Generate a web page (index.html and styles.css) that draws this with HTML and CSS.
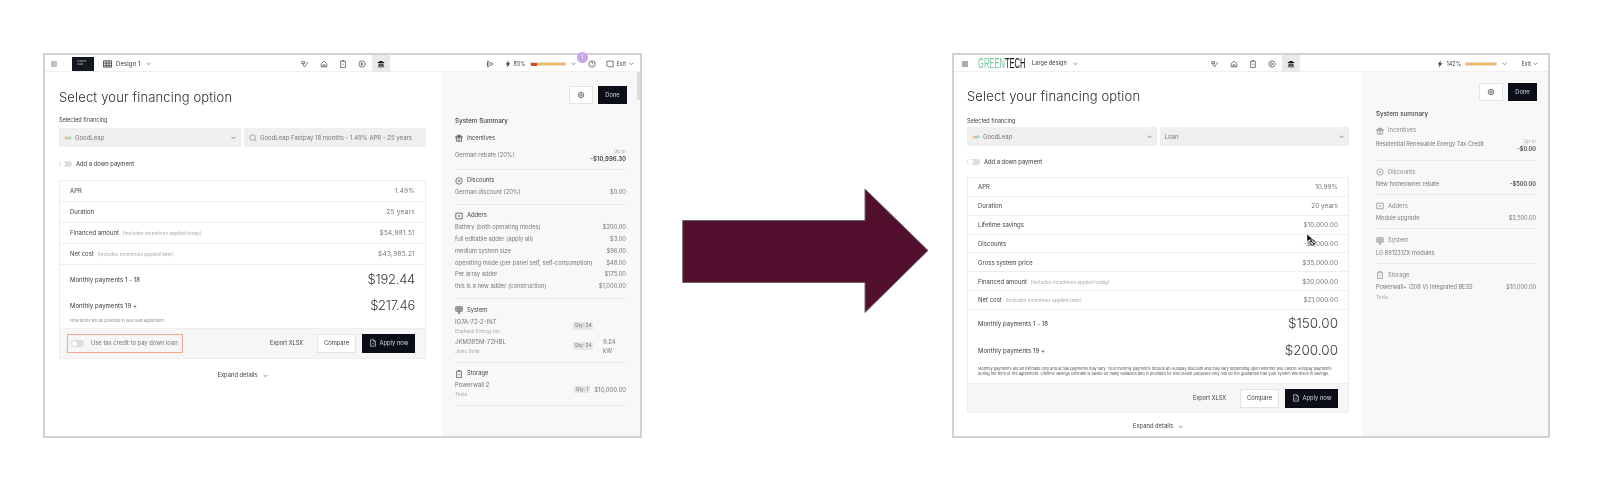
FILE: index.html
```html
<!DOCTYPE html>
<html lang="en">
<head>
<meta charset="utf-8">
<title>Financing option before and after</title>
<link rel="stylesheet" href="styles.css">
</head>
<body>
<svg class="sprite" aria-hidden="true">
  <symbol id="i-menu" viewBox="0 0 8 8"><path d="M1 2h6M1 4h6M1 6h6"/></symbol>
  <symbol id="i-grid" viewBox="0 0 10 8"><path d="M.5.5h9v7h-9zM.5 3h9M.5 5.5h9M3.5.5v7M6.5.5v7"/></symbol>
  <symbol id="i-chev" viewBox="0 0 6 4"><path d="M.7.8 3 3.2 5.3.8"/></symbol>
  <symbol id="i-roof" viewBox="0 0 10 10"><path d="M1 2h3.5v2.5H1zM2.700 4.500V7L4.500 8.500 8.500 2.500"/></symbol>
  <symbol id="i-home" viewBox="0 0 10 10"><path d="M1.500 4.500 5 1.500l3.500 3v4h-7zM3.700 8.500V6h2.600v2.500"/></symbol>
  <symbol id="i-batt" viewBox="0 0 10 10"><path d="M2 1.500h6v8H2zM4 1.500V.7h2v.8M5 4.500v2"/></symbol>
  <symbol id="i-play" viewBox="0 0 10 10"><circle cx="5" cy="5" r="4"/><path d="M4 3.200 6.500 5 4 6.800z"/></symbol>
  <symbol id="i-bank" viewBox="0 0 10 10"><path class="solid" d="M5 .8 9.200 3v.8H.8V3zM1 8h8v1.200H1zM2 4.300h1.500v3.200H2zM4.200 4.300h1.600v3.200H4.200zM6.500 4.300H8v3.200H6.500z"/></symbol>
  <symbol id="i-send" viewBox="0 0 10 10"><path d="M2 1.200 8.500 5 2 8.800zM.8 5H5"/></symbol>
  <symbol id="i-bolt" viewBox="0 0 10 10"><path class="solid" d="M6 .5 2 5.500h2.200L3.600 9.500 8 4.200H5.600z"/></symbol>
  <symbol id="i-help" viewBox="0 0 10 10"><circle cx="5" cy="5" r="4"/><path d="M4 4c0-1.400 2.200-1.200 2 0 0 .8-1 .8-1 1.800M5 7v.5"/></symbol>
  <symbol id="i-exit" viewBox="0 0 10 10"><path d="M1 7V1.500h8v7H4M1 6.200 3.500 8.500M1 8.500h.5"/></symbol>
  <symbol id="i-gear" viewBox="0 0 10 10"><circle cx="5" cy="5" r="3.500"/><circle cx="5" cy="5" r="1.500"/></symbol>
  <symbol id="i-gift" viewBox="0 0 10 10"><path d="M1 3h8v1.800H1zM1.800 4.800V9h6.400V4.800M5 3v6M5 3C3 3 2.500 1 3.700 1 4.500 1 5 3 5 3c0 0 .5-2 1.300-2C7.500 1 7 3 5 3"/></symbol>
  <symbol id="i-disc" viewBox="0 0 10 10"><circle cx="5" cy="5" r="4"/><path d="M3.500 5h3M5 3.800v2.400"/></symbol>
  <symbol id="i-add" viewBox="0 0 10 10"><path d="M1 1.500h8v7H1z"/><path class="solid" d="M4.200 4.200h1.600v1.600H4.200z"/></symbol>
  <symbol id="i-sys" viewBox="0 0 10 10"><path d="M1 1h8v5.500H1zM1 3.700h8M3.700 1v5.500M6.300 1v5.500M5 6.500V9M3.500 9h3"/></symbol>
  <symbol id="i-doc" viewBox="0 0 10 10"><path d="M2 1h4l2 2v6H2zM6 1v2h2M3.800 6.700 5 5.300l1.200 1.400"/></symbol>
  <symbol id="i-search" viewBox="0 0 10 10"><circle cx="4.500" cy="4.500" r="3.500"/><path d="m7 7 2.300 2.300"/></symbol>
  <symbol id="i-leap" viewBox="0 0 10 5"><path class="orange" d="M.8 2.800C1.500.8 3.500.8 5 2.500"/><path class="green" d="M5 2.500c1.500 1.800 3.500 1.800 4.200-.3"/><path class="orange" d="M1 3.800c1 .5 2.500.3 4-1.300"/><path class="green" d="M5 2.500c1-1.300 3-1.800 4-.7"/></symbol>
</svg>

<section class="window before">
  <header class="topbar">
    <svg class="ico menu"><use href="#i-menu"/></svg>
    <div class="logo-box"><span>Outlook<br>Solar</span></div>
    <svg class="ico grid"><use href="#i-grid"/></svg>
    <span class="design">Design 1</span>
    <svg class="chev"><use href="#i-chev"/></svg>
    <nav class="steps">
      <svg class="ico"><use href="#i-roof"/></svg>
      <svg class="ico"><use href="#i-home"/></svg>
      <svg class="ico"><use href="#i-batt"/></svg>
      <svg class="ico"><use href="#i-play"/></svg>
      <span class="step-on"><svg class="ico"><use href="#i-bank"/></svg></span>
    </nav>
    <div class="tools">
      <svg class="ico send"><use href="#i-send"/></svg>
      <svg class="ico bolt"><use href="#i-bolt"/></svg>
      <span class="pct">85%</span>
      <span class="meter"><span class="meter-red"></span></span>
      <svg class="chev"><use href="#i-chev"/></svg>
      <span class="help"><svg class="ico"><use href="#i-help"/></svg><span class="badge">1</span></span>
      <svg class="ico exit"><use href="#i-exit"/></svg>
      <span class="exit-label">Exit</span>
      <svg class="chev"><use href="#i-chev"/></svg>
    </div>
  </header>
  <div class="body">
    <main class="main">
      <h1>Select your financing option</h1>
      <div class="field-label">Selected financing</div>
      <div class="selects">
        <div class="select"><svg class="leap"><use href="#i-leap"/></svg><span>GoodLeap</span><svg class="chev"><use href="#i-chev"/></svg></div>
        <div class="select search"><svg class="ico"><use href="#i-search"/></svg><span>GoodLeap Fastpay 18 months - 1.49% APR - 25 years</span></div>
      </div>
      <div class="toggle-row"><span class="toggle"></span><span>Add a down payment</span></div>
      <div class="card">
        <div class="row"><span class="name">APR</span><span class="val">1.49%</span></div>
        <div class="row"><span class="name">Duration</span><span class="val">25 years</span></div>
        <div class="row"><span class="name strong">Financed amount <small>(Includes incentives applied today)</small></span><span class="val">$54,981.51</span></div>
        <div class="row"><span class="name strong">Net cost <small>(Includes incentives applied later)</small></span><span class="val">$43,985.21</span></div>
        <div class="monthly"><span>Monthly payments 1 - 18</span><span class="big">$192.44</span></div>
        <div class="monthly"><span>Monthly payments 19 +</span><span class="big">$217.46</span></div>
        <p class="fine">Final terms will be provided in your loan agreement.</p>
        <div class="foot">
          <div class="credit"><span class="toggle"></span><span>Use tax credit to pay down loan</span></div>
          <span class="export">Export XLSX</span>
          <span class="btn compare">Compare</span>
          <span class="btn dark apply"><svg class="ico"><use href="#i-doc"/></svg>Apply now</span>
        </div>
      </div>
      <div class="expand">Expand details <svg class="chev"><use href="#i-chev"/></svg></div>
    </main>
    <aside class="side">
      <span class="scroll"></span>
      <div class="side-btns"><span class="btn"><svg class="ico"><use href="#i-gear"/></svg></span><span class="btn dark">Done</span></div>
      <h2>System Summary</h2>
      <div class="group first">
        <div class="head"><svg class="ico"><use href="#i-gift"/></svg>Incentives</div>
        <div class="line upto"><span>German rebate (20%)</span><span class="stack"><small>Up to</small><b>-$10,996.30</b></span></div>
      </div>
      <div class="group">
        <div class="head"><svg class="ico"><use href="#i-disc"/></svg>Discounts</div>
        <div class="line"><span>German discount (20%)</span><span>$0.00</span></div>
      </div>
      <div class="group">
        <div class="head"><svg class="ico"><use href="#i-add"/></svg>Adders</div>
        <div class="line"><span>Battery (both operating modes)</span><span>$200.00</span></div>
        <div class="line"><span>full editable adder (apply all)</span><span>$3.00</span></div>
        <div class="line"><span>medium system size</span><span>$96.00</span></div>
        <div class="line"><span>operating mode (per panel self, self-consumption)</span><span>$48.00</span></div>
        <div class="line"><span>Per array adder</span><span>$175.00</span></div>
        <div class="line"><span>this is a new adder (construction)</span><span>$1,000.00</span></div>
      </div>
      <div class="group">
        <div class="head"><svg class="ico"><use href="#i-sys"/></svg>System</div>
        <div class="item"><div class="item-name"><span>IQ7A-72-2-INT</span><small>Enphase Energy Inc.</small></div><span class="qty">Qty: 24</span><span class="kw"></span></div>
        <div class="item"><div class="item-name"><span>JKM385M-72HBL</span><small>Jinko Solar</small></div><span class="qty">Qty: 24</span><span class="kw">9.24<br>kW</span></div>
      </div>
      <div class="group">
        <div class="head"><svg class="ico"><use href="#i-batt"/></svg>Storage</div>
        <div class="item"><div class="item-name"><span>Powerwall 2</span><small>Tesla</small></div><span class="qty">Qty: 1</span><span class="price">$10,000.00</span></div>
      </div>
    </aside>
  </div>
</section>

<svg class="arrow" viewBox="0 0 247 126" aria-hidden="true"><path d="M.7 32.500H183V1L246 62.500 183 124.500V94.500H.7z"/></svg>

<section class="window after">
  <header class="topbar">
    <svg class="ico menu"><use href="#i-menu"/></svg>
    <div class="brand"><span class="brand-text"><span class="brand-green">GREEN</span>TECH</span></div>
    <span class="design">Large design</span>
    <svg class="chev"><use href="#i-chev"/></svg>
    <nav class="steps">
      <svg class="ico"><use href="#i-roof"/></svg>
      <svg class="ico"><use href="#i-home"/></svg>
      <svg class="ico"><use href="#i-batt"/></svg>
      <svg class="ico"><use href="#i-play"/></svg>
      <span class="step-on"><svg class="ico"><use href="#i-bank"/></svg></span>
    </nav>
    <div class="tools">
      <svg class="ico bolt"><use href="#i-bolt"/></svg>
      <span class="pct">142%</span>
      <span class="meter"></span>
      <svg class="chev"><use href="#i-chev"/></svg>
      <span class="exit-label">Exit</span>
      <svg class="chev"><use href="#i-chev"/></svg>
    </div>
  </header>
  <div class="body">
    <main class="main">
      <h1>Select your financing option</h1>
      <div class="field-label">Selected financing</div>
      <div class="selects">
        <div class="select"><svg class="leap"><use href="#i-leap"/></svg><span>GoodLeap</span><svg class="chev"><use href="#i-chev"/></svg></div>
        <div class="select"><span>Loan</span><svg class="chev"><use href="#i-chev"/></svg></div>
      </div>
      <div class="toggle-row"><span class="toggle"></span><span>Add a down payment</span></div>
      <div class="card">
        <div class="row"><span class="name">APR</span><span class="val">10.99%</span></div>
        <div class="row"><span class="name">Duration</span><span class="val">20 years</span></div>
        <div class="row"><span class="name">Lifetime savings</span><span class="val">$10,000.00</span></div>
        <div class="row"><span class="name">Discounts</span><span class="val">-$5,000.00</span></div>
        <div class="row"><span class="name">Gross system price</span><span class="val">$35,000.00</span></div>
        <div class="row"><span class="name strong">Financed amount <small>(Includes incentives applied today)</small></span><span class="val">$30,000.00</span></div>
        <div class="row"><span class="name strong">Net cost <small>(Includes incentives applied later)</small></span><span class="val">$21,000.00</span></div>
        <div class="monthly"><span>Monthly payments 1 - 18</span><span class="big">$150.00</span></div>
        <div class="monthly"><span>Monthly payments 19 +</span><span class="big">$200.00</span></div>
        <p class="fine">Monthly payments are an estimate only and actual payments may vary. Your monthly payments include an Autopay discount and may vary depending upon whether you cancel Autopay payments during the term of the agreement. Lifetime savings estimate is based on many variables and is provided for discussion purposes only. We do not guarantee that your system will result in savings.</p>
        <div class="foot">
          <span class="export">Export XLSX</span>
          <span class="btn compare">Compare</span>
          <span class="btn dark apply"><svg class="ico"><use href="#i-doc"/></svg>Apply now</span>
        </div>
      </div>
      <div class="expand">Expand details <svg class="chev"><use href="#i-chev"/></svg></div>
    </main>
    <aside class="side">
      <div class="side-btns"><span class="btn"><svg class="ico"><use href="#i-gear"/></svg></span><span class="btn dark">Done</span></div>
      <h2>System summary</h2>
      <div class="group first">
        <div class="head"><svg class="ico"><use href="#i-gift"/></svg>Incentives</div>
        <div class="line upto"><span>Residential Renewable Energy Tax Credit</span><span class="stack"><small>Up to</small><b>-$0.00</b></span></div>
      </div>
      <div class="group">
        <div class="head"><svg class="ico"><use href="#i-disc"/></svg>Discounts</div>
        <div class="line"><span>New homeowner rebate</span><b>-$500.00</b></div>
      </div>
      <div class="group">
        <div class="head"><svg class="ico"><use href="#i-add"/></svg>Adders</div>
        <div class="line"><span>Module upgrade</span><span>$3,500.00</span></div>
      </div>
      <div class="group">
        <div class="head"><svg class="ico"><use href="#i-sys"/></svg>System</div>
        <div class="line"><span>LG 891231ZX modules</span></div>
      </div>
      <div class="group last">
        <div class="head"><svg class="ico"><use href="#i-batt"/></svg>Storage</div>
        <div class="line"><span>Powerwall+ (208 V) Integrated BESS</span><span>$10,000.00</span></div>
        <small class="maker">Tesla</small>
      </div>
    </aside>
  </div>
  <svg class="cursor" viewBox="0 0 12 14" aria-hidden="true"><path class="cursor-arrow" d="M1 0v7.500L3 6l4-.5z"/><circle class="cursor-ring" cx="6.500" cy="8.500" r="2.600"/><path class="cursor-ring" d="m4.700 6.700 3.600 3.600"/></svg>
</section>
```

FILE: styles.css
```css
* { box-sizing: border-box; }
html, body { margin: 0; height: 500px; overflow: hidden; background: #fff; }
body { position: relative; font: 6px/1.2 Inter, "Liberation Sans", sans-serif; color: #33363d; }
.sprite { position: absolute; width: 0; height: 0; }

svg { display: block; flex: none; fill: none; stroke: currentColor; stroke-width: .9; }
.solid { fill: currentColor; stroke: none; }
.orange { stroke: #e58a32; }
.green { stroke: #6cb48e; }
.ico { width: 8px; height: 8px; }
.chev { width: 5px; height: 3.500px; color: #666; }

.window {
  position: absolute; top: 53px; height: 385px;
  border: 2px solid #d2d2d2; background: #fff;
  display: flex; flex-direction: column;
  filter: blur(.45px);
}
.before { left: 43px; width: 599px; }
.after { left: 952px; width: 598px; }

.topbar { height: 17px; padding-top: 1px; display: flex; align-items: center; flex: none; position: relative; border-bottom: 1px solid #efefef; }
.menu { width: 8px; height: 8px; }
.before .menu { margin-left: 5px; color: #777; }
.after .menu { margin-left: 7px; color: #444; }
.logo-box { width: 22px; height: 14px; margin-left: 14px; background: #14171f; color: #c9c9c9; font-size: 2.500px; line-height: 1.100; display: flex; align-items: center; padding-left: 5px; }
.grid { width: 9px; margin-left: 9px; }
.design { margin: 0 5px 0 4px; font-size: 6px; letter-spacing: .1px; }
.brand { margin-left: 9px; width: 50px; overflow: visible; }
.brand-text { display: block; font: 14px/17px "Liberation Sans", sans-serif; color: #111; transform: scaleX(.54); transform-origin: left center; white-space: nowrap; }
.brand-green { color: #74c79c; }
.after .design { margin-left: 4px; margin-right: 6px; font-size: 5.500px; }

.steps { position: absolute; top: 0; height: 17px; display: flex; align-items: center; gap: 11px; color: #4a4d55; }
.before .steps { left: 256px; }
.after .steps { left: 257px; }
.step-on { width: 18px; height: 17px; margin-left: -5px; background: #e9e9e9; display: flex; align-items: center; justify-content: center; color: #111; }

.tools { position: absolute; top: 0; right: 0; height: 18px; display: flex; align-items: center; color: #444; }
.send { margin-right: 10px; }
.bolt { margin-right: 2px; }
.pct { width: 16px; font-size: 5.500px; }
.meter { display: block; width: 36px; height: 4px; margin-right: 5px; background: #f2bc52; border: .5px solid #ddd; }
.meter-red { display: block; width: 6px; height: 3px; background: #c8502a; }
.help { position: relative; margin-left: 12px; margin-right: 10px; }
.badge { position: absolute; left: -11px; top: -8px; width: 11px; height: 11px; border-radius: 50%; background: #c7a6ec; color: #fff; font-size: 5px; line-height: 11px; text-align: center; }
.exit { margin-right: 3px; }
.exit-label { margin-right: 3px; font-size: 5.500px; }
.before .tools { padding-right: 6px; }
.after .tools { padding-right: 10px; }
.after .bolt { margin-right: 3px; }
.after .meter { width: 32px; }
.after .tools .pct { width: 18px; }
.after .exit-label { margin-left: 15px; margin-right: 2px; }

.body { flex: 1; display: flex; min-height: 0; }
.main { flex: 1; min-width: 0; }
.before .main { padding: 16px 16px 0 14px; }
.after .main { padding: 15px 13px 0 13px; }
h1 { margin: 0; font-size: 13px; line-height: 18px; font-weight: 300; letter-spacing: .15px; color: #2b2e35; }
.field-label { height: 10px; line-height: 10px; font-size: 5.500px; color: #444; }
.before .field-label { margin: 9px 0 3px; }
.after .field-label { margin: 11px 0 1px; }
.selects { display: flex; gap: 3px; }
.select { flex: 1; height: 19px; background: #efefef; display: flex; align-items: center; gap: 3px; padding: 0 5px; color: #777; font-size: 6px; }
.select span { flex: 1; }
.search .ico { color: #888; }
.leap { width: 8px; height: 4px; }
.toggle-row { display: flex; align-items: center; gap: 4px; height: 8px; font-size: 5.800px; }
.before .toggle-row { margin: 13px 0 12px; }
.after .toggle-row { margin: 12px 0 11px; }
.toggle { width: 13px; height: 6.500px; border-radius: 4px; background: #ddd; position: relative; flex: none; }
.toggle::before { content: ""; position: absolute; left: .5px; top: .5px; width: 5.500px; height: 5.500px; border-radius: 50%; background: #fff; }

.card { border: 1px solid #eee; }
.row { display: flex; justify-content: space-between; align-items: center; padding: 1px 10px 0; border-bottom: 1px solid #eee; line-height: 8px; }
.before .row { height: 20.900px; }
.after .row { height: 18.850px; }
.name { font-size: 6px; color: #3c3f46; }
.name small { font-size: 4.800px; color: #aaa; margin-left: 2px; }
.val { font-size: 6.500px; color: #777; letter-spacing: .25px; }
.after .val { letter-spacing: 0; }
.monthly { display: flex; justify-content: space-between; align-items: center; padding: 0 10px; font-size: 6px; letter-spacing: .05px; }
.before .monthly { height: 25.500px; }
.before .row + .monthly { margin-top: 2.500px; }
.after .monthly { height: 27px; }
.big { font-size: 13.500px; font-weight: 300; color: #33363d; letter-spacing: 0; }
.before .big { font-size: 13px; letter-spacing: -.25px; }
.fine { margin: 0; padding: 0 10px; font-size: 3.900px; color: #888; }
.before .fine { line-height: 6px; padding-bottom: 4px; }
.after .fine { font-size: 3.850px; color: #555; line-height: 5.500px; padding: 2px 9px 6px 10px; }
.foot { height: 29.500px; background: #f6f6f6; border-top: 1px solid #eee; display: flex; align-items: center; justify-content: flex-end; padding: 0 10px; }
.credit { display: flex; align-items: center; gap: 7px; width: 116px; height: 19px; margin: 0 auto 0 -3px; padding-left: 3px; border: 1px solid #f6a78c; font-size: 5.800px; color: #777; }
.export { font-size: 5.600px; color: #444; margin-right: 14px; }
.btn { height: 19px; min-width: 19px; padding: 0 7px; background: #fff; border: 1px solid #e4e4e4; display: flex; align-items: center; justify-content: center; gap: 3px; font-size: 5.800px; color: #444; }
.btn.dark { background: #0b0e19; color: #d7d7d7; border-color: #0b0e19; }
.compare { width: 39px; padding: 0; margin-right: 6px; }
.apply { width: 53px; padding: 0; }
.expand { height: 10px; display: flex; align-items: center; justify-content: center; gap: 5px; font-size: 5.800px; color: #444; }
.before .expand { margin-top: 12px; }
.after .expand { margin-top: 8px; }

.side { flex: none; position: relative; background: #f8f8f8; color: #777; }
.before .side { width: 198px; padding: 14px 14px 0 13px; }
.after .side { width: 186px; padding: 11px 12px 0 14px; }
.scroll { position: absolute; right: 0; top: 0; width: 3px; height: 28px; background: #ddd; }
.side-btns { display: flex; justify-content: flex-end; gap: 5px; margin-right: -1px; }
.side-btns .btn { height: 18px; }
.side-btns .dark { width: 29px; padding: 0; }
h2 { margin: 0; font-size: 6.300px; line-height: 11px; font-weight: 500; color: #444; }
.before h2 { margin-top: 12px; }
.after h2 { margin-top: 8px; }
.group { border-bottom: 1px solid #e8e8e8; padding: 6px 0 5.500px; }
.group.first { padding-top: 6px; }
.after .group { padding: 6.500px 0 4.200px; }
.after .group.first { padding: 5.500px 0 7px; }
.after .group.last { border-bottom: 0; }
.head { display: flex; align-items: center; gap: 4px; height: 10px; font-size: 5.800px; color: #444; margin-bottom: 1px; }
.after .head { color: #888; }
.line { display: flex; justify-content: space-between; align-items: center; min-height: 11.800px; font-size: 5.800px; }
.after .line { font-size: 5.600px; }
.after .upto { margin-top: .5px; }
.before .upto { margin-top: 4px; }
.stack { display: flex; flex-direction: column; align-items: flex-end; line-height: 8px; }
.stack small, .item small, .maker { font-size: 4.800px; color: #aaa; }
.stack b { font-size: 6px; }
.stack b, .line b { font-weight: 600; color: #444; }
.after .stack b { font-size: 5.600px; }
.item { display: flex; align-items: center; font-size: 6px; min-height: 20px; }
.item-name { flex: 1; display: flex; flex-direction: column; line-height: 10px; }
.item small { line-height: 9px; }
.qty { background: #e6e6e6; padding: 1px 1.500px; font-size: 4.800px; text-align: center; white-space: nowrap; }
.kw { width: 33px; padding-left: 10px; line-height: 9px; }
.price { width: 36px; text-align: right; white-space: nowrap; }
.maker { display: block; line-height: 8px; }

.arrow { position: absolute; left: 682px; top: 188px; width: 247px; height: 126px; fill: #53102e; stroke: #666; stroke-width: 1; }
.cursor { position: absolute; left: 352px; top: 179px; width: 12px; height: 14px; stroke-width: 1; color: #222; }
.cursor-arrow { fill: #111; stroke: #fff; stroke-width: .4; }
.cursor-ring { stroke: #222; }
```
